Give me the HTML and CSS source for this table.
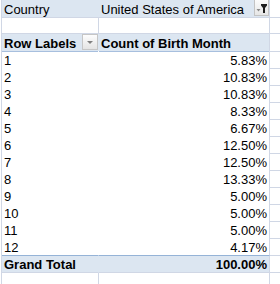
FILE: index.html
```html
<!DOCTYPE html>
<html>
<head>
  <title>Birth Month by Country</title>
  <link rel="stylesheet" href="styles.css">
</head>
<body>
  <div class="pivot">
    <!-- report filter -->
    <div class="row filter">
      <div class="cell">Country</div>
      <div class="cell pick">
        <span>United States of America</span>
        <span class="filter-btn">
          <svg width="13" height="14" viewBox="0 0 13 14">
            <polygon points="1.5,8 5.5,8 3.5,10.5" fill="#8a8a8a"/>
            <polygon points="6,3 12,3 12,4.5 10,7 10,12 8,12 8,7 6,4.5" fill="#1e1e1e"/>
          </svg>
        </span>
      </div>
      <div class="cell spare"></div>
    </div>

    <div class="row blank">
      <div class="cell"></div>
      <div class="cell"></div>
      <div class="cell spare"></div>
    </div>

    <div class="row head">
      <div class="cell labels">Row Labels<span class="drop-btn"></span></div>
      <div class="cell">Count of Birth Month</div>
      <div class="cell spare"></div>
    </div>

    <div class="row item"><div class="cell">1</div><div class="cell num">5.83%</div><div class="cell spare"></div></div>
    <div class="row item"><div class="cell">2</div><div class="cell num">10.83%</div><div class="cell spare"></div></div>
    <div class="row item"><div class="cell">3</div><div class="cell num">10.83%</div><div class="cell spare"></div></div>
    <div class="row item"><div class="cell">4</div><div class="cell num">8.33%</div><div class="cell spare"></div></div>
    <div class="row item"><div class="cell">5</div><div class="cell num">6.67%</div><div class="cell spare"></div></div>
    <div class="row item"><div class="cell">6</div><div class="cell num">12.50%</div><div class="cell spare"></div></div>
    <div class="row item"><div class="cell">7</div><div class="cell num">12.50%</div><div class="cell spare"></div></div>
    <div class="row item"><div class="cell">8</div><div class="cell num">13.33%</div><div class="cell spare"></div></div>
    <div class="row item"><div class="cell">9</div><div class="cell num">5.00%</div><div class="cell spare"></div></div>
    <div class="row item"><div class="cell">10</div><div class="cell num">5.00%</div><div class="cell spare"></div></div>
    <div class="row item"><div class="cell">11</div><div class="cell num">5.00%</div><div class="cell spare"></div></div>
    <div class="row item"><div class="cell">12</div><div class="cell num">4.17%</div><div class="cell spare"></div></div>

    <div class="row total">
      <div class="cell">Grand Total</div>
      <div class="cell num">100.00%</div>
      <div class="cell spare"></div>
    </div>

    <div class="row blank">
      <div class="cell"></div>
      <div class="cell"></div>
      <div class="cell spare"></div>
    </div>
  </div>
</body>
</html>
```

FILE: styles.css
```css
body {
  margin: 0;
  background: #fff;
  font-family: "Liberation Sans", Arial, sans-serif;
  font-size: 13px;
  color: #000;
}
.pivot {
  margin-left: 1px;
  border-left: 1px solid #d0d7e5;
}
.row {
  display: grid;
  grid-template-columns: 97px 171px 1fr;
  height: 17px;
}
.cell {
  box-sizing: border-box;
  border-right: 1px solid #d0d7e5;
  border-bottom: 1px solid #d0d7e5;
  padding: 2px 2px 0;
  line-height: 15px;
  white-space: nowrap;
}
.spare {
  border-right: none;
}

/* report filter row */
.filter .cell:not(.spare) {
  background: #dce6f1;
}
.filter .cell:first-child {
  border-right-color: #dce6f1;
}
.pick {
  display: flex;
  justify-content: space-between;
  padding-right: 0;
}
.filter-btn {
  box-sizing: border-box;
  width: 15px;
  height: 16px;
  margin-top: -2px;
  border: 1px solid #c3c3c3;
  border-top: none;
  background: linear-gradient(#fbfbfb, #e6e6e6);
  display: flex;
  align-items: center;
  justify-content: center;
}

/* header row */
.head .cell:not(.spare) {
  background: #dce6f1;
  font-weight: bold;
  border-bottom-color: #a7bfde;
}
.head .cell:first-child {
  border-right-color: #dce6f1;
}
.labels {
  display: flex;
  justify-content: space-between;
  padding-right: 0;
}
.drop-btn {
  box-sizing: border-box;
  width: 16px;
  height: 16px;
  margin-top: -2px;
  border: 1px solid #c6c6c6;
  background: linear-gradient(#fdfdfd, #e4e4e4);
  position: relative;
}
.drop-btn::after {
  content: "";
  position: absolute;
  left: 4px;
  top: 6px;
  border-left: 3px solid transparent;
  border-right: 3px solid transparent;
  border-top: 3px solid #808080;
}

/* value rows */
.item .cell:not(.spare) {
  border-bottom-color: #fff;
}
.item .cell:first-child {
  border-right-color: #fff;
}
.num {
  text-align: right;
}

/* grand total */
.total {
  height: 18px;
}
.total .cell:not(.spare) {
  background: #dce6f1;
  font-weight: bold;
  border-top: 1px solid #95b3d7;
  padding-top: 1px;
}
.total .cell:first-child {
  border-right-color: #dce6f1;
}
```
